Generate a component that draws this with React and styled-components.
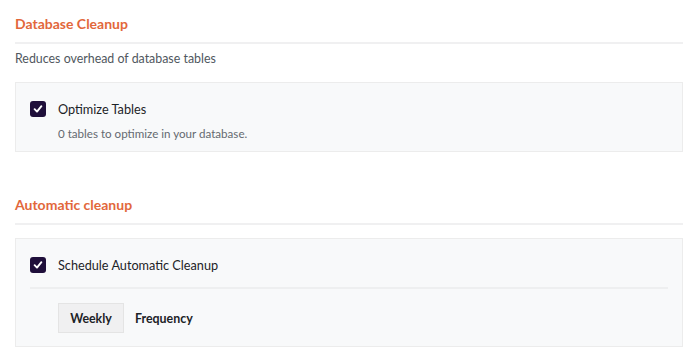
import React from "react";
import styled, { createGlobalStyle } from "styled-components";

const Global = createGlobalStyle`
  html, body { margin: 0; padding: 0; background: #ffffff; }
  body { font-family: Lato, "Noto Sans", sans-serif; color: #1d2327; }
  * { box-sizing: border-box; }
`;

const Page = styled.div`
  padding: 14px 15px 0 15px;
  display: flex;
  flex-direction: column;
`;

const Section = styled.section`
  display: flex;
  flex-direction: column;
  margin-bottom: ${(p) => p.$gap || 0}px;
`;

const Heading = styled.h2`
  margin: 0;
  font-size: 14px;
  line-height: 20px;
  font-weight: 700;
  color: #e2673b;
  padding-bottom: 8px;
  border-bottom: 2px solid #f0f0f1;
`;

const Description = styled.p`
  margin: 6px 0 0 0;
  font-size: 12.4px;
  line-height: 18px;
  color: #50575e;
`;

const Card = styled.div`
  margin-top: ${(p) => p.$top}px;
  background: #f8f9fa;
  border: 1px solid #ececec;
  padding: 18px 14px ${(p) => p.$bottom}px 14px;
  display: flex;
  flex-direction: column;
`;

const OptionRow = styled.label`
  display: flex;
  align-items: flex-start;
  gap: 12px;
`;

const Box = styled.span`
  flex: 0 0 16px;
  width: 16px;
  height: 16px;
  border-radius: 3px;
  background: #1f0f3a;
  display: flex;
  align-items: center;
  justify-content: center;
`;

const OptionText = styled.div`
  display: flex;
  flex-direction: column;
`;

const OptionTitle = styled.span`
  font-size: 12.7px;
  line-height: 16px;
  color: #1d2327;
`;

const OptionHint = styled.span`
  margin-top: 9px;
  font-size: 11.6px;
  line-height: 16px;
  color: #646970;
`;

const Divider = styled.hr`
  margin: 14px 0 0 0;
  border: 0;
  border-top: 2px solid #eeeff0;
`;

const FreqRow = styled.div`
  margin-top: 14px;
  padding-left: 28px;
  display: flex;
  align-items: center;
  gap: 11px;
`;

const FreqButton = styled.div`
  width: 66px;
  height: 30px;
  background: #f0f0f1;
  border: 1px solid #e4e4e4;
  display: flex;
  align-items: center;
  justify-content: center;
  font-size: 12.4px;
  font-weight: 700;
  color: #1d2327;
`;

const FreqLabel = styled.span`
  font-size: 12.4px;
  font-weight: 700;
  color: #1d2327;
`;

const Check = () => (
  <Box>
    <svg width="10" height="10" viewBox="0 0 10 10">
      <path d="M1.6 5.2 L4 7.6 L8.4 2.2" fill="none" stroke="#fff" strokeWidth="1.9" strokeLinecap="round" strokeLinejoin="round" />
    </svg>
  </Box>
);

export default function App() {
  return (
    <>
      <Global />
      <Page>
        <Section $gap={43}>
          <Heading>Database Cleanup</Heading>
          <Description>Reduces overhead of database tables</Description>
          <Card $top={14} $bottom={9}>
            <OptionRow>
              <Check />
              <OptionText>
                <OptionTitle>Optimize Tables</OptionTitle>
                <OptionHint>0 tables to optimize in your database.</OptionHint>
              </OptionText>
            </OptionRow>
          </Card>
        </Section>
        <Section>
          <Heading>Automatic cleanup</Heading>
          <Card $top={13} $bottom={13}>
            <OptionRow>
              <Check />
              <OptionTitle>Schedule Automatic Cleanup</OptionTitle>
            </OptionRow>
            <Divider />
            <FreqRow>
              <FreqButton>Weekly</FreqButton>
              <FreqLabel>Frequency</FreqLabel>
            </FreqRow>
          </Card>
        </Section>
      </Page>
    </>
  );
}
